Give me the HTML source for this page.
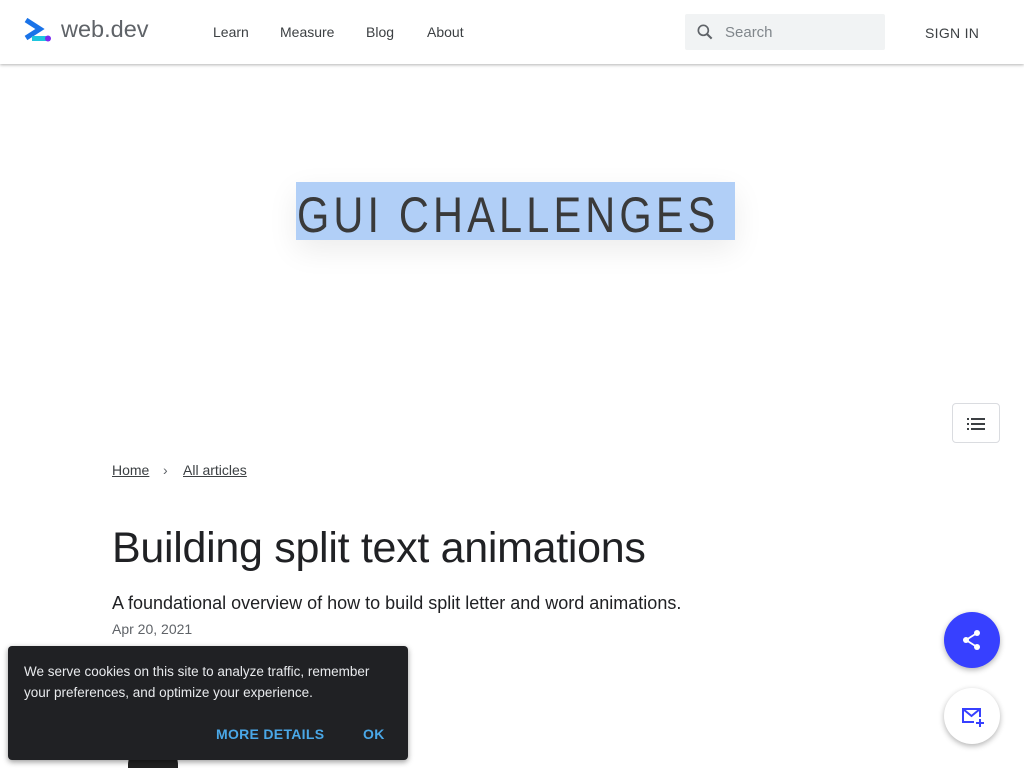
<!DOCTYPE html>
<html style="width:1024px;height:768px;overflow:hidden"><head><style>
*{box-sizing:border-box;margin:0;padding:0}
body{width:1024px;height:768px;overflow:hidden;background:#fff;font-family:"Liberation Sans",sans-serif;position:relative;color:#202124}
.hdr{position:absolute;top:0;left:0;width:1024px;height:64px;background:#fff;box-shadow:0 1px 3px rgba(0,0,0,.3);z-index:2}
.nav a{position:absolute;top:24px;font-size:14px;color:#3c4043;text-decoration:none}
.search{position:absolute;left:685px;top:14px;width:200px;height:36px;background:#f1f3f4;border-radius:2px}
.search span{position:absolute;left:40px;top:10px;font-size:15px;color:#80868b}
.hero{position:absolute;left:296px;top:182px;width:439px;height:58px;background:rgba(100,160,240,.5);box-shadow:0 10px 30px rgba(0,0,0,.08);overflow:hidden}
.hero span{position:absolute;left:1px;top:4px;font-size:50px;font-weight:400;letter-spacing:5px;color:#3a3a3a;white-space:nowrap;transform:scaleX(.83);transform-origin:left}
.bc{position:absolute;top:462px;font-size:14px;color:#3c4043}
.bc a{color:#3c4043;text-decoration:underline}
h1{position:absolute;left:112px;top:524px;font-size:43px;font-weight:400;color:#202124;letter-spacing:-.3px}
.sub{position:absolute;left:112px;top:593px;font-size:18px}
.date{position:absolute;left:112px;top:621px;font-size:14px;color:#5f6368}
.cookie{position:absolute;left:8px;top:646px;width:400px;height:114px;background:#202124;border-radius:4px;box-shadow:0 2px 6px rgba(0,0,0,.4)}
.cookie p{position:absolute;left:16px;top:15px;width:375px;font-size:13.5px;line-height:21px;color:#e8eaed}
.cookie b{position:absolute;top:80px;font-size:14px;color:#4aa8e8;letter-spacing:.3px}
.fab{position:absolute;left:944px;width:56px;height:56px;border-radius:50%;box-shadow:0 2px 6px rgba(0,0,0,.3)}
.toc{position:absolute;left:952px;top:403px;width:48px;height:40px;border:1px solid #dadce0;border-radius:4px}
</style></head><body>
<div class="hdr">
<svg style="position:absolute;left:24px;top:18px" width="28" height="26" viewBox="0 0 28 26"><path d="M2 2 L16 11 L2 20" fill="none" stroke="#1a73e8" stroke-width="5" stroke-linejoin="miter"/><rect x="8" y="18" width="16" height="5" fill="#1fc5de"/><circle cx="24" cy="20.5" r="3" fill="#7b2cf0"/></svg>
<div style="position:absolute;left:61px;top:16px;font-size:23.5px;color:#5f6368">web.dev</div>
<div class="nav"><a style="left:213px">Learn</a><a style="left:280px">Measure</a><a style="left:366px">Blog</a><a style="left:427px">About</a></div>
<div class="search"><svg style="position:absolute;left:10px;top:8px" width="20" height="20" viewBox="0 0 24 24"><circle cx="10" cy="10" r="6" fill="none" stroke="#5f6368" stroke-width="2"/><path d="M14.5 14.5 L20 20" stroke="#5f6368" stroke-width="2.5"/></svg><span>Search</span></div>
<div style="position:absolute;left:925px;top:25px;font-size:14px;color:#3c4043;letter-spacing:.3px">SIGN IN</div>
</div>
<div class="hero"><span>GUI CHALLENGES</span></div>
<div class="toc"><svg style="position:absolute;left:14px;top:13px" width="20" height="14" viewBox="0 0 20 14"><g fill="#3c4043"><rect x="0" y="1" width="2" height="2"/><rect x="4" y="1" width="14" height="2"/><rect x="0" y="6" width="2" height="2"/><rect x="4" y="6" width="14" height="2"/><rect x="0" y="11" width="2" height="2"/><rect x="4" y="11" width="14" height="2"/></g></svg></div>
<div class="bc" style="left:112px"><a>Home</a></div>
<div class="bc" style="left:163px;color:#5f6368">›</div>
<div class="bc" style="left:183px"><a>All articles</a></div>
<h1>Building split text animations</h1>
<div class="sub">A foundational overview of how to build split letter and word animations.</div>
<div class="date">Apr 20, 2021</div>
<div style="position:absolute;left:128px;top:740px;width:50px;height:28px;border-radius:25px 25px 0 0;background:#222"></div>
<div class="fab" style="top:612px;background:#3740ff"><svg style="position:absolute;left:18px;top:17px" width="20" height="22" viewBox="0 0 20 22"><circle cx="15" cy="4" r="3" fill="#fff"/><circle cx="4" cy="11" r="3" fill="#fff"/><circle cx="15" cy="18" r="3" fill="#fff"/><path d="M15 4 L4 11 L15 18" stroke="#fff" stroke-width="1.8" fill="none"/></svg></div>
<div class="fab" style="top:688px;background:#fff"><svg style="position:absolute;left:17px;top:18px" width="24" height="22" viewBox="0 0 24 22"><path d="M13 16 H2 V3 H19 V11 M2 3 L10.5 10 L19 3" fill="none" stroke="#3740ff" stroke-width="2"/><path d="M19 13 V21 M15 17 H23" stroke="#3740ff" stroke-width="2"/></svg></div>
<div class="cookie"><p>We serve cookies on this site to analyze traffic, remember your preferences, and optimize your experience.</p><b style="left:208px">MORE DETAILS</b><b style="left:355px">OK</b></div>
</body></html>
